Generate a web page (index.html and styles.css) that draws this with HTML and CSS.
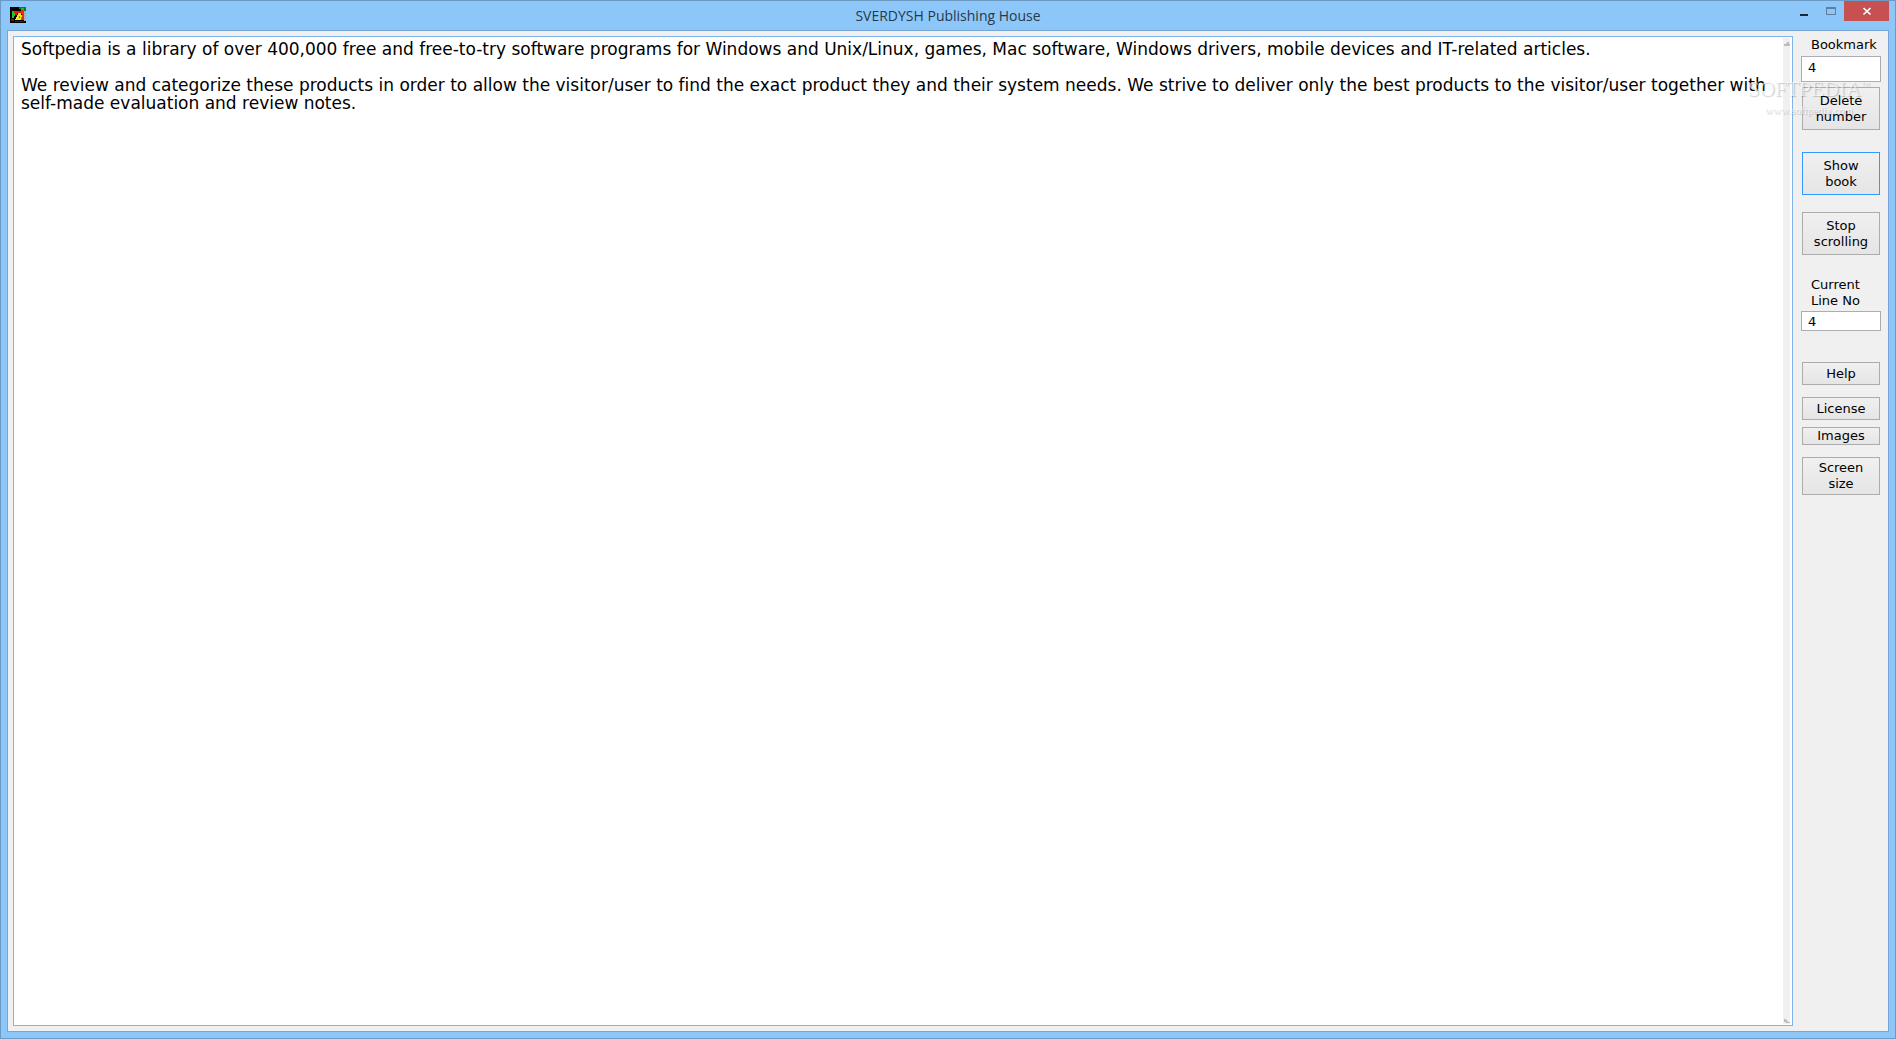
FILE: index.html
```
<!DOCTYPE html>
<html lang="en">
<head>
  <meta charset="utf-8">
  <title>SVERDYSH Publishing House</title>
  <link rel="stylesheet" href="styles.css">
</head>
<body>

  <div class="window">
    <header class="titlebar">
      <svg class="app-icon" viewBox="0 0 16 16" shape-rendering="crispEdges" aria-hidden="true">
        <rect width="16" height="16" fill="#000"/>
        <path d="M9 0h7v4h-4v-2h-3z" fill="#0a7a2c"/>
        <path d="M11 1h3v2h-3z" fill="#2fae4a"/>
        <path d="M2 4h2v2h1v3h-1v2h-2z" fill="#0bd80b"/>
        <path d="M4 4h7v2h-4v2h-2v-2h-1z" fill="#e01a1a"/>
        <path d="M11 3h3v10h-2v-6h-1z" fill="#d83220"/>
        <path d="M14 4h2v10h-2z" fill="#a9b3a0"/>
        <path d="M8 6h3v2h1v5h-7v-2h1v-2h1v-2h1z" fill="#f5e616"/>
        <path d="M7 6h1v2h-1v2h-1v2h-1v-2h1v-2h1z" fill="#000"/>
        <path d="M9 9h1v2h-1zM11 10h1v3h-1z" fill="#8a7a00"/>
        <path d="M1 12h3v2h-3z" fill="#7d1010"/>
        <path d="M5 14h9v1h-9z" fill="#20206a"/>
      </svg>
      <h1 class="caption">SVERDYSH Publishing House</h1>
      <div class="controls">
        <button type="button" class="control" aria-label="Minimize">
          <svg width="10" height="10" viewBox="0 0 10 10" shape-rendering="crispEdges"><path d="M1 8h8v2H1z" fill="#1c2733"/></svg>
        </button>
        <button type="button" class="control" aria-label="Maximize">
          <svg width="10" height="10" viewBox="0 0 10 10" shape-rendering="crispEdges"><path d="M0 1h10v8H0zM1 3v5h8V3z" fill="#5f7f9c" fill-rule="evenodd"/></svg>
        </button>
        <button type="button" class="control close" aria-label="Close">
          <svg width="10" height="10" viewBox="0 0 10 10"><path d="M1.500 2l7 6.500M8.500 2l-7 6.500" stroke="#fff" stroke-width="1.700"/></svg>
        </button>
      </div>
    </header>

    <main class="client">
      <div class="reader">
        <textarea class="book" aria-label="Book text" spellcheck="false">Softpedia is a library of over 400,000 free and free-to-try software programs for Windows and Unix/Linux, games, Mac software, Windows drivers, mobile devices and IT-related articles.

We review and categorize these products in order to allow the visitor/user to find the exact product they and their system needs. We strive to deliver only the best products to the visitor/user together with self-made evaluation and review notes.</textarea>
        <div class="scrollbar">
          <svg width="7" height="8" viewBox="0 0 7 8" shape-rendering="crispEdges"><path d="M1 6h6v2H1zM3 5h3v1H3zM4 4h2v1H4z" fill="#bcbcbc"/></svg>
          <svg width="7" height="8" viewBox="0 0 7 8" shape-rendering="crispEdges"><path d="M1 3h2v1h1v1h1v1h2v1H3v-1H1z" fill="#bcbcbc"/></svg>
        </div>
      </div>

      <aside class="sidebar">
        <label class="label" for="bookmark">Bookmark</label>
        <input class="field tall" type="text" id="bookmark" value="4">
        <button type="button" class="btn large delete">Delete number</button>
        <button type="button" class="btn large show">Show book</button>
        <button type="button" class="btn large stop">Stop scrolling</button>
        <label class="label line-label" for="line">Current Line No</label>
        <input class="field" type="text" id="line" value="4">
        <button type="button" class="btn help">Help</button>
        <button type="button" class="btn license">License</button>
        <button type="button" class="btn images">Images</button>
        <button type="button" class="btn screen">Screen size</button>
      </aside>
    </main>

    <div class="watermark">
      <div class="brand">SOFTPEDIA<sup>™</sup></div>
      <div class="site">www.softpedia.com</div>
    </div>
    <div class="taskbar-edge first"></div>
    <div class="taskbar-edge rest"></div>
  </div>

</body>
</html>
```

FILE: styles.css
```
* { box-sizing: border-box; margin: 0; padding: 0; }
body {
  font-family: Verdana, "DejaVu Sans", sans-serif;
  font-size: 13px;
  line-height: 16px;
  color: #000;
}
.window {
  position: relative;
  display: flex; flex-direction: column;
  height: 100vh;
  padding: 0 6px 6px;
  background: #8dc7fa;
  border: 1px solid #6c9ac3;
  overflow: hidden;
}

/* title bar */
.titlebar {
  position: relative;
  display: flex; justify-content: space-between;
  height: 29px;
  flex: none;
}
.app-icon { width: 16px; height: 16px; margin: 6px 0 0 3px; }
.caption {
  position: absolute; left: 0; right: 0; top: 5px;
  text-align: center;
  font-family: "Segoe UI", "Open Sans", sans-serif;
  font-size: 14px; font-weight: normal; line-height: 20px;
  color: #283848;
  pointer-events: none;
}
.controls { display: flex; height: 20px; }
.control {
  display: flex; align-items: center; justify-content: center;
  width: 27px;
  background: none; border: none;
}
.control svg { display: block; }
.close { width: 45px; background: #c75050; }

/* client area */
.client {
  flex: 1;
  display: flex;
  min-height: 0;
  padding: 5px 7px 5px 5px;
  background: #f0f0f0;
  border: 1px solid #76a7d4;
}
.reader {
  flex: 1;
  display: flex;
  padding: 1px;
  background: #fff;
  border: 1px solid #7eb4ea;
}
.book {
  flex: 1;
  padding: 2px 6px;
  border: none; outline: none; resize: none;
  overflow: hidden;
  background: #fff; color: #000;
  font-family: Verdana, "DejaVu Sans", sans-serif;
  font-size: 17px; line-height: 18px;
  font-variant-ligatures: none;
}
.scrollbar {
  display: flex; flex-direction: column; justify-content: space-between;
  width: 7px;
  margin-right: 1px;
  background: #f0f0f0;
}

/* side panel */
.sidebar {
  display: flex; flex-direction: column; align-items: center;
  width: 88px;
  padding-left: 8px;
}
.label { width: 62px; margin: 1px 0 3px; padding-left: 1px; white-space: nowrap; }
.field {
  width: 80px; height: 20px;
  padding: 0 6px;
  background: #fff;
  border: 1px solid #abadb3;
  font: inherit;
}
.tall { height: 26px; padding-bottom: 3px; }
.btn {
  width: 78px; height: 23px;
  flex: none;
  padding: 0 8px;
  background: linear-gradient(#f0f0f0, #e5e5e5);
  border: 1px solid #acacac;
  color: #000;
  font: inherit;
}
.large { height: 43px; }
.delete { margin-top: 5px; }
.show { margin-top: 22px; border-color: #3399ff; }
.stop { margin-top: 17px; }
.line-label { margin: 22px 0 2px; white-space: normal; }
.help { margin-top: 31px; }
.license { margin-top: 12px; }
.images { height: 18px; margin-top: 7px; }
.screen { height: 38px; margin-top: 12px; }

.watermark {
  position: absolute; top: 76px; right: 20px;
  width: 132px;
  color: rgba(255, 255, 255, 0.6);
  text-shadow: 1px 1px 1px rgba(0, 0, 0, 0.2);
  font-family: "Liberation Serif", serif;
  text-align: center;
  pointer-events: none;
}
.brand { font-size: 21px; line-height: 24px; white-space: nowrap; }
.brand sup { font-size: 9px; line-height: 1px; }
.site { font-size: 11px; line-height: 18px; }

/* taskbar buttons showing under the window */
.taskbar-edge { position: absolute; bottom: -1px; height: 1px; }
.first { left: 59px; width: 60px; background: #4a6f90; }
.rest {
  left: 369px; width: 618px;
  background: repeating-linear-gradient(90deg, #4a6f90 0 60px, #6c9ac3 60px 62px);
}
```
